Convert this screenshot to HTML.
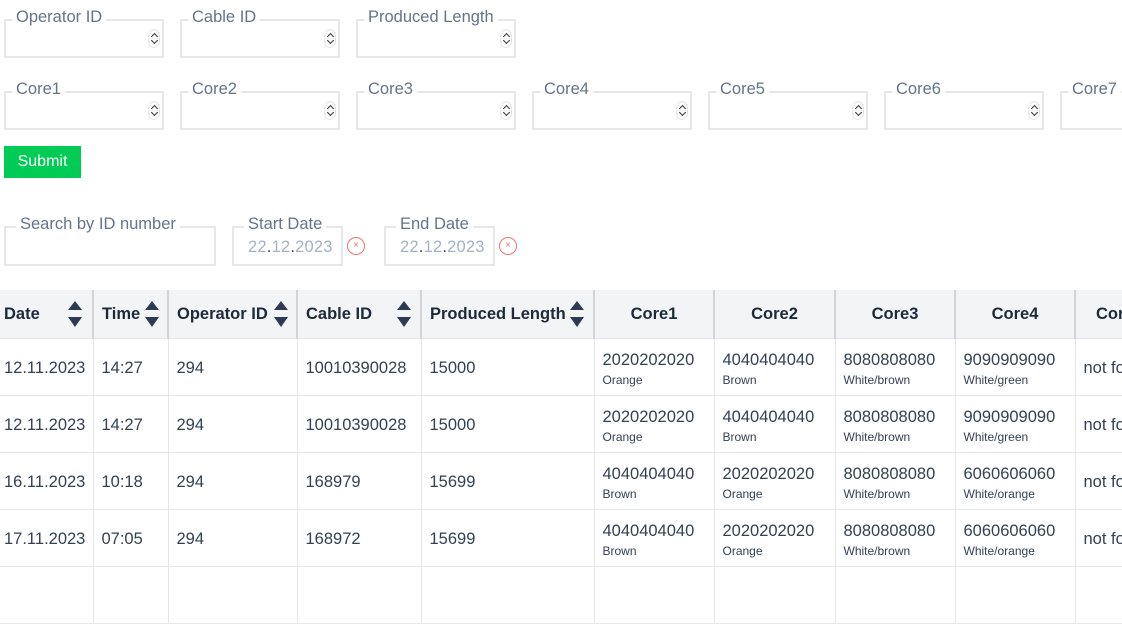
<!DOCTYPE html>
<html><head><meta charset="utf-8">
<style>
*{box-sizing:border-box;margin:0;padding:0}
body{width:1122px;height:577px;overflow:hidden;background:#fff;font-family:"Liberation Sans",Arial,sans-serif;color:#334155;position:relative}
.fs{position:absolute;border:2px solid #e5e7eb;height:39px}
.fs .lg{position:absolute;top:-14px;left:6px;background:#fff;padding:0 4px;font-size:16.5px;color:#64748b;line-height:20px;white-space:nowrap}
.fs .lg.w{left:10px}
.sp{position:absolute;right:2px;top:8px;width:12px;height:19px;border:1px solid #e5e7eb;border-radius:6px;background:#fafafa}
.sp:before,.sp:after{content:"";position:absolute;left:3px;width:4px;height:4px;border-left:1.3px solid #333;border-top:1.3px solid #333}
.sp:before{top:4px;transform:rotate(45deg)}
.sp:after{top:8px;transform:rotate(225deg)}
.btn{position:absolute;left:4px;top:146px;width:77px;height:32px;background:#00cc55;color:#fff;font-size:16px;line-height:32px;text-align:center}
.date{position:absolute;left:14px;top:10px;font-size:16.5px;color:#a3b1c9;letter-spacing:0.2px}
.date b{color:#334155;font-weight:normal}
.clr{position:absolute;width:18px;height:18px;border:1.3px solid #f87171;border-radius:50%;color:#f87171;font-size:10px;line-height:15px;text-align:center}
table{position:absolute;left:0;top:290px;border-collapse:collapse;table-layout:fixed;width:1180px}
th{background:#f3f4f6;height:48px;font-size:16.5px;font-weight:bold;color:#1e293b;text-align:left;padding:2px 8px 0;border-left:2px solid #d4d4d8;position:relative;white-space:nowrap;overflow:hidden}
th:first-child{border-left:none;padding-left:4px}
th.c{text-align:center}
td{height:57px;border:1px solid #e5e7eb;font-size:16.5px;color:#334155;padding:3px 8px 0;white-space:nowrap;overflow:hidden}
td:first-child{border-left:none;padding-left:4px}
td.k{padding-top:5px}
td .s{font-size:12px;display:block;margin-top:3px}
.ar{position:absolute;top:11px;width:14px;height:26px}
.ar:before{content:"";position:absolute;top:0;left:0;border-left:7px solid transparent;border-right:7px solid transparent;border-bottom:9px solid #2d3a52}
.ar:after{content:"";position:absolute;top:16px;left:0;border-left:7px solid transparent;border-right:7px solid transparent;border-top:10px solid #2d3a52}
</style></head><body>

<div class="fs" style="left:4px;top:19px;width:160px"><span class="lg">Operator ID</span><div class="sp"></div></div>
<div class="fs" style="left:180px;top:19px;width:160px"><span class="lg">Cable ID</span><div class="sp"></div></div>
<div class="fs" style="left:356px;top:19px;width:160px"><span class="lg">Produced Length</span><div class="sp"></div></div>

<div class="fs" style="left:4px;top:91px;width:160px"><span class="lg">Core1</span><div class="sp"></div></div>
<div class="fs" style="left:180px;top:91px;width:160px"><span class="lg">Core2</span><div class="sp"></div></div>
<div class="fs" style="left:356px;top:91px;width:160px"><span class="lg">Core3</span><div class="sp"></div></div>
<div class="fs" style="left:532px;top:91px;width:160px"><span class="lg">Core4</span><div class="sp"></div></div>
<div class="fs" style="left:708px;top:91px;width:160px"><span class="lg">Core5</span><div class="sp"></div></div>
<div class="fs" style="left:884px;top:91px;width:160px"><span class="lg">Core6</span><div class="sp"></div></div>
<div class="fs" style="left:1060px;top:91px;width:160px"><span class="lg">Core7</span><div class="sp"></div></div>

<div class="btn">Submit</div>

<div class="fs" style="left:4px;top:226px;width:212px;height:40px"><span class="lg w">Search by ID number</span></div>
<div class="fs" style="left:232px;top:226px;width:111px;height:40px"><span class="lg w">Start Date</span><span class="date">22<b>.</b>12<b>.</b>2023</span></div>
<div class="clr" style="left:347px;top:237px">×</div>
<div class="fs" style="left:384px;top:226px;width:111px;height:40px"><span class="lg w">End Date</span><span class="date">22<b>.</b>12<b>.</b>2023</span></div>
<div class="clr" style="left:499px;top:237px">×</div>

<table>
<colgroup><col style="width:93px"><col style="width:75px"><col style="width:129px"><col style="width:124px"><col style="width:173px"><col style="width:120px"><col style="width:121px"><col style="width:120px"><col style="width:120px"><col style="width:120px"></colgroup>
<tr>
<th>Date<span class="ar" style="left:68px"></span></th>
<th>Time<span class="ar" style="left:51px"></span></th>
<th>Operator ID<span class="ar" style="left:105px"></span></th>
<th>Cable ID<span class="ar" style="left:99px"></span></th>
<th>Produced Length<span class="ar" style="left:148px"></span></th>
<th class="c">Core1</th><th class="c">Core2</th><th class="c">Core3</th><th class="c">Core4</th><th style="padding-left:20px">Core5</th>
</tr>
<tr><td>12.11.2023</td><td>14:27</td><td>294</td><td>10010390028</td><td>15000</td>
<td class="k">2020202020<span class="s">Orange</span></td><td class="k">4040404040<span class="s">Brown</span></td><td class="k">8080808080<span class="s">White/brown</span></td><td class="k">9090909090<span class="s">White/green</span></td><td>not found</td></tr>
<tr><td>12.11.2023</td><td>14:27</td><td>294</td><td>10010390028</td><td>15000</td>
<td class="k">2020202020<span class="s">Orange</span></td><td class="k">4040404040<span class="s">Brown</span></td><td class="k">8080808080<span class="s">White/brown</span></td><td class="k">9090909090<span class="s">White/green</span></td><td>not found</td></tr>
<tr><td>16.11.2023</td><td>10:18</td><td>294</td><td>168979</td><td>15699</td>
<td class="k">4040404040<span class="s">Brown</span></td><td class="k">2020202020<span class="s">Orange</span></td><td class="k">8080808080<span class="s">White/brown</span></td><td class="k">6060606060<span class="s">White/orange</span></td><td>not found</td></tr>
<tr><td>17.11.2023</td><td>07:05</td><td>294</td><td>168972</td><td>15699</td>
<td class="k">4040404040<span class="s">Brown</span></td><td class="k">2020202020<span class="s">Orange</span></td><td class="k">8080808080<span class="s">White/brown</span></td><td class="k">6060606060<span class="s">White/orange</span></td><td>not found</td></tr>
<tr><td>&nbsp;</td><td></td><td></td><td></td><td></td><td></td><td></td><td></td><td></td><td></td></tr>
</table>
</body></html>
